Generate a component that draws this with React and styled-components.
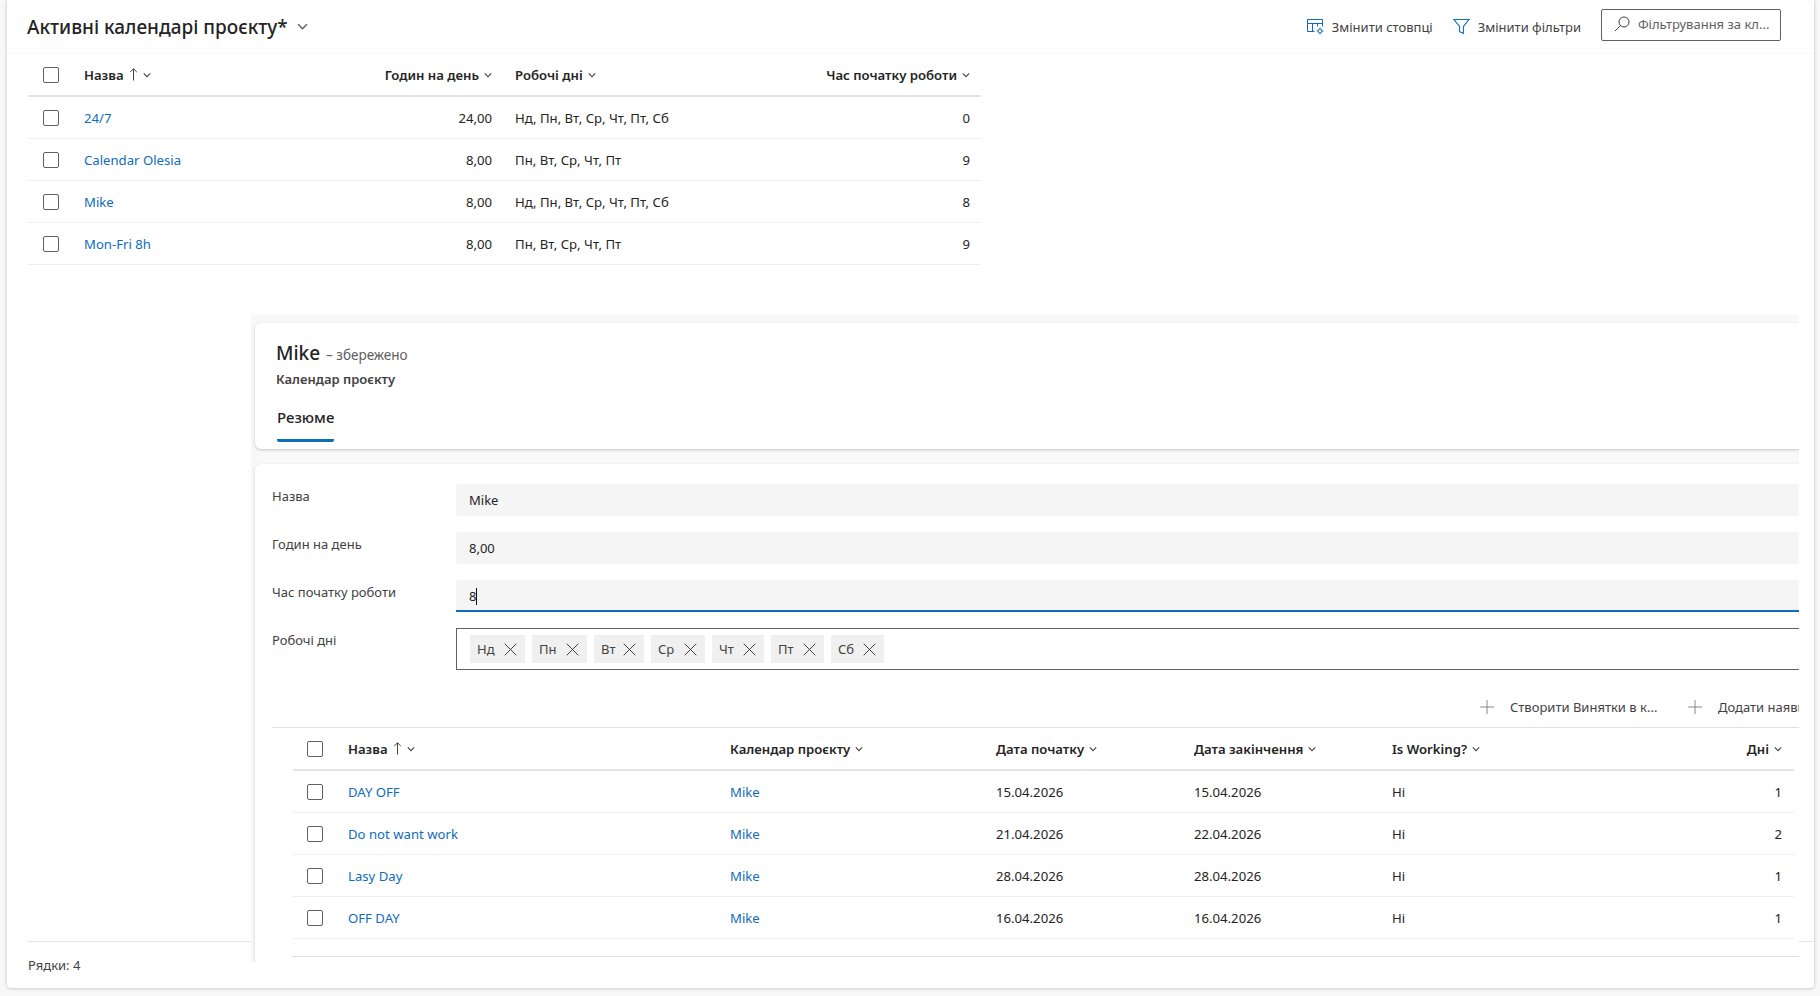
import React from "react";
import styled, { createGlobalStyle } from "styled-components";

const Global = createGlobalStyle`
  html, body { margin: 0; padding: 0; background: #f8f8f8; }
  #root { width: 1820px; height: 996px; overflow: hidden; }
  * { box-sizing: border-box; }
  body { font-family: "Noto Sans", "Open Sans", sans-serif; color: #242424; }
`;

const Page = styled.div`
  height: 996px;
  padding: 0 6px 8px 7px;
`;
const Card = styled.main`
  position: relative;
  height: 100%;
  background: #fff;
  border-radius: 0 0 4px 4px;
  box-shadow: 0 0 4px rgba(0, 0, 0, 0.14), 0 1px 3px rgba(0, 0, 0, 0.1);
  display: flex;
  flex-direction: column;
`;
const Header = styled.header`
  height: 54px;
  flex: none;
  display: flex;
  align-items: center;
  padding: 0 33px 0 20px;
  border-bottom: 1px solid #f8f8f8;
`;
const Title = styled.h1`
  margin: 0;
  font-size: 19px;
  line-height: 26px;
  font-weight: 500;
  color: #242424;
`;
const TitleChevron = styled.span`
  display: inline-flex;
  margin-left: 9px;
  color: #616161;
`;
const Commands = styled.div`
  margin-left: auto;
  display: flex;
  align-items: center;
`;
const Command = styled.span`
  display: inline-flex;
  align-items: center;
  gap: 8px;
  font-size: 13px;
  color: #424242;
  margin-right: 20px;
  white-space: nowrap;
`;
const SearchBox = styled.div`
  width: 180px;
  height: 32px;
  margin-bottom: 4px;
  border: 1px solid #616161;
  border-radius: 2px;
  display: flex;
  align-items: center;
  gap: 8px;
  padding: 0 8px 2px 12px;
  font-size: 13px;
  color: #616161;
  white-space: nowrap;
  overflow: hidden;
`;
const Grid = styled.section`
  margin-left: ${(p) => p.$ml}px;
  width: ${(p) => p.$w}px;
`;
const Row = styled.div`
  display: grid;
  grid-template-columns: ${(p) => p.$cols};
  align-items: center;
  height: ${(p) => p.$h || 42}px;
  font-size: 13.15px;
  border-bottom: ${(p) => (p.$head ? "2px solid #e4e4e4" : "1px solid #efefef")};
  font-weight: ${(p) => (p.$head ? 600 : 400)};
  color: #242424;
`;
const Cell = styled.div`
  display: flex;
  align-items: center;
  gap: 5px;
  white-space: nowrap;
  justify-content: ${(p) => (p.$right ? "flex-end" : "flex-start")};
  padding-right: ${(p) => p.$pr || 0}px;
`;
const Check = styled.span`
  display: block;
  width: 16px;
  height: 16px;
  margin-left: ${(p) => p.$ml}px;
  border: 1px solid #616161;
  border-radius: 2px;
  background: #fff;
`;
const LinkText = styled.span`
  color: #0f6cbd;
`;
const Footer = styled.footer`
  margin: auto 0 0 21px;
  height: 47px;
  border-top: 1px solid #e4e4e4;
  padding-top: 13px;
  font-size: 13px;
  line-height: 20px;
  color: #424242;
`;
const Panel = styled.aside`
  position: absolute;
  left: 244px;
  top: 315px;
  width: 1548px;
  height: 647px;
  background: #f8f8f8;
  overflow: hidden;
  padding: 8px 0 0 4px;
`;
const PanelInner = styled.div`
  width: 1570px;
`;
const SummaryCard = styled.div`
  height: 126px;
  background: #fff;
  border-radius: 6px;
  box-shadow: 0 1px 3px rgba(0, 0, 0, 0.22);
  padding: 17px 0 0 21px;
`;
const RecordLine = styled.div`
  display: flex;
  align-items: baseline;
  gap: 6px;
  line-height: 26px;
  margin-bottom: 2px;
`;
const RecordName = styled.span`
  font-size: 19px;
  font-weight: 500;
`;
const Saved = styled.span`
  font-size: 13.5px;
  color: #616161;
`;
const EntityName = styled.div`
  font-size: 13px;
  line-height: 18px;
  font-weight: 600;
  color: #424242;
`;
const Tab = styled.div`
  display: inline-block;
  margin: 18px 0 0 1px;
  font-size: 15px;
  line-height: 22px;
  font-weight: 500;
  padding-bottom: 11px;
  border-bottom: 3px solid #0f6cbd;
  border-radius: 0 0 2px 2px;
`;
const FormCard = styled.div`
  margin-top: 15px;
  height: 520px;
  background: #fff;
  border-radius: 6px 6px 0 0;
  box-shadow: 0 1px 3px rgba(0, 0, 0, 0.18);
  padding: 20px 0 0 17px;
`;
const Field = styled.div`
  display: grid;
  grid-template-columns: 184px 1fr;
  margin-bottom: 16px;
  font-size: 13px;
  margin-right: 21px;
`;
const FieldLabel = styled.label`
  line-height: 20px;
  color: #424242;
  padding-top: 2px;
`;
const Input = styled.div`
  height: 32px;
  background: #f5f5f5;
  border-radius: 3px 3px ${(p) => (p.$focus ? "0 0" : "3px 3px")};
  border-bottom: ${(p) => (p.$focus ? "2px solid #0f6cbd" : "none")};
  padding-left: 13px;
  line-height: 33px;
  color: #242424;
`;
const Caret = styled.span`
  display: inline-block;
  width: 1px;
  height: 17px;
  vertical-align: -4px;
  background: #111;
`;
const TagBox = styled.div`
  height: 42px;
  border: 1px solid #616161;
  display: flex;
  align-items: center;
  gap: 7px;
  padding-left: 13px;
`;
const Tag = styled.span`
  display: inline-flex;
  align-items: center;
  justify-content: space-between;
  width: ${(p) => p.$w}px;
  height: 28px;
  padding: 0 8px 0 7px;
  background: #f0f0f0;
  font-size: 13px;
  color: #424242;
`;
const SubCommands = styled.div`
  display: flex;
  justify-content: flex-end;
  align-items: center;
  height: 42px;
  width: 1527px;
  border-bottom: 1px solid #e0e0e0;
  overflow: hidden;
  font-size: 13px;
  color: #424242;
`;
const SubCommand = styled.span`
  display: inline-flex;
  align-items: center;
  gap: 16px;
  margin-right: ${(p) => p.$mr}px;
  flex: none;
  width: ${(p) => p.$w}px;
  overflow: hidden;
  white-space: nowrap;
`;
const BottomRule = styled.div`
  width: 1507px;
  margin: 17px 0 0 20px;
  border-top: 1px solid #e0e0e0;
`;
const SubGrid = styled.div`
  margin-left: 21px;
  width: 1501px;
`;
const IconBox = styled.svg`
  flex: none;
  display: block;
`;

const Chevron = ({ size = 8, color = "#424242" }) => (
  <IconBox width={size} height={size} viewBox="0 0 8 8" fill="none" stroke={color} strokeWidth="1.1">
    <path d="M0.8 2.4 4 5.6 7.2 2.4" />
  </IconBox>
);
const ArrowUp = () => (
  <IconBox width="9" height="13" viewBox="0 0 9 13" fill="none" stroke="#424242" strokeWidth="1">
    <path d="M4.5 12.5V1M1.2 4 4.5 .8 7.8 4" />
  </IconBox>
);
const ColumnsIcon = () => (
  <IconBox width="17" height="16" viewBox="0 0 17 16" fill="none" stroke="#0f6cbd" strokeWidth="1">
    <path d="M.5 12.5V.5h15v7M.5 4.5h15M5.5 4.5v8M10.5 4.5v3M.5 12.5h7" />
    <circle cx="13" cy="12" r="2" />
    <path d="M13 8.6v1.2M13 14.2v1.2M9.6 12h1.2M15.2 12h1.2" />
  </IconBox>
);
const FilterIcon = () => (
  <IconBox width="17" height="17" viewBox="0 0 17 17" fill="none" stroke="#0f6cbd" strokeWidth="1.1">
    <path d="M1 1.5h15l-5.6 7v6.8l-3.8-1.6V8.5z" />
  </IconBox>
);
const SearchIcon = () => (
  <IconBox width="16" height="16" viewBox="0 0 16 16" fill="none" stroke="#424242" strokeWidth="1">
    <circle cx="10" cy="6" r="5" />
    <path d="M6.4 9.6.8 15.2" />
  </IconBox>
);
const Plus = () => (
  <IconBox width="14" height="14" viewBox="0 0 14 14" fill="none" stroke="#8a8886" strokeWidth="1">
    <path d="M7 0v14M0 7h14" />
  </IconBox>
);
const Cross = () => (
  <IconBox width="13" height="13" viewBox="0 0 13 13" fill="none" stroke="#424242" strokeWidth="1">
    <path d="M.7.7 12.3 12.3M12.3.7.7 12.3" />
  </IconBox>
);

const topCols = "56px 250px 181px 255px 211px";
const topRows = [
  ["24/7", "24,00", "Нд, Пн, Вт, Ср, Чт, Пт, Сб", "0"],
  ["Calendar Olesia", "8,00", "Пн, Вт, Ср, Чт, Пт", "9"],
  ["Mike", "8,00", "Нд, Пн, Вт, Ср, Чт, Пт, Сб", "8"],
  ["Mon-Fri 8h", "8,00", "Пн, Вт, Ср, Чт, Пт", "9"],
];
const subCols = "55px 382px 266px 198px 198px 208px 194px";
const subRows = [
  ["DAY OFF", "15.04.2026", "15.04.2026", "1"],
  ["Do not want work", "21.04.2026", "22.04.2026", "2"],
  ["Lasy Day", "28.04.2026", "28.04.2026", "1"],
  ["OFF DAY", "16.04.2026", "16.04.2026", "1"],
];
const tags = [
  ["Нд", 55], ["Пн", 55], ["Вт", 50], ["Ср", 54], ["Чт", 52], ["Пт", 53], ["Сб", 53],
];

export default function App() {
  return (
    <Page>
      <Global />
      <Card>
        <Header>
          <Title>Активні календарі проєкту*</Title>
          <TitleChevron><Chevron size={11} color="#616161" /></TitleChevron>
          <Commands>
            <Command><ColumnsIcon />Змінити стовпці</Command>
            <Command><FilterIcon />Змінити фільтри</Command>
            <SearchBox><SearchIcon />Фільтрування за кл...</SearchBox>
          </Commands>
        </Header>
        <Grid $ml={21} $w={953}>
          <Row $cols={topCols} $head $h={43}>
            <Check $ml={15} />
            <Cell>Назва <ArrowUp /><Chevron /></Cell>
            <Cell $right $pr={23}>Годин на день <Chevron /></Cell>
            <Cell>Робочі дні <Chevron /></Cell>
            <Cell $right $pr={11}>Час початку роботи <Chevron /></Cell>
          </Row>
          {topRows.map((r) => (
            <Row $cols={topCols} key={r[0]}>
              <Check $ml={15} />
              <Cell><LinkText>{r[0]}</LinkText></Cell>
              <Cell $right $pr={23}>{r[1]}</Cell>
              <Cell>{r[2]}</Cell>
              <Cell $right $pr={11}>{r[3]}</Cell>
            </Row>
          ))}
        </Grid>
        <Footer>Рядки: 4</Footer>
        <Panel>
          <PanelInner>
            <SummaryCard>
              <RecordLine>
                <RecordName>Mike</RecordName>
                <Saved>– збережено</Saved>
              </RecordLine>
              <EntityName>Календар проєкту</EntityName>
              <Tab>Резюме</Tab>
            </SummaryCard>
            <FormCard>
              <Field>
                <FieldLabel>Назва</FieldLabel>
                <Input>Mike</Input>
              </Field>
              <Field>
                <FieldLabel>Годин на день</FieldLabel>
                <Input>8,00</Input>
              </Field>
              <Field>
                <FieldLabel>Час початку роботи</FieldLabel>
                <Input $focus>8<Caret /></Input>
              </Field>
              <Field>
                <FieldLabel>Робочі дні</FieldLabel>
                <TagBox>
                  {tags.map(([t, w]) => (
                    <Tag key={t} $w={w}>{t}<Cross /></Tag>
                  ))}
                </TagBox>
              </Field>
              <SubCommands>
                <SubCommand $w={178} $mr={30}><Plus />Створити Винятки в к...</SubCommand>
                <SubCommand $w={111} $mr={0}><Plus />Додати наявний запис</SubCommand>
              </SubCommands>
              <SubGrid>
                <Row $cols={subCols} $head $h={43}>
                  <Check $ml={14} />
                  <Cell>Назва <ArrowUp /><Chevron /></Cell>
                  <Cell>Календар проєкту <Chevron /></Cell>
                  <Cell>Дата початку <Chevron /></Cell>
                  <Cell>Дата закінчення <Chevron /></Cell>
                  <Cell>Is Working? <Chevron /></Cell>
                  <Cell $right $pr={12}>Дні <Chevron /></Cell>
                </Row>
                {subRows.map((r) => (
                  <Row $cols={subCols} key={r[0]}>
                    <Check $ml={14} />
                    <Cell><LinkText>{r[0]}</LinkText></Cell>
                    <Cell><LinkText>Mike</LinkText></Cell>
                    <Cell>{r[1]}</Cell>
                    <Cell>{r[2]}</Cell>
                    <Cell>Ні</Cell>
                    <Cell $right $pr={12}>{r[3]}</Cell>
                  </Row>
                ))}
              </SubGrid>
              <BottomRule />
            </FormCard>
          </PanelInner>
        </Panel>
      </Card>
    </Page>
  );
}
